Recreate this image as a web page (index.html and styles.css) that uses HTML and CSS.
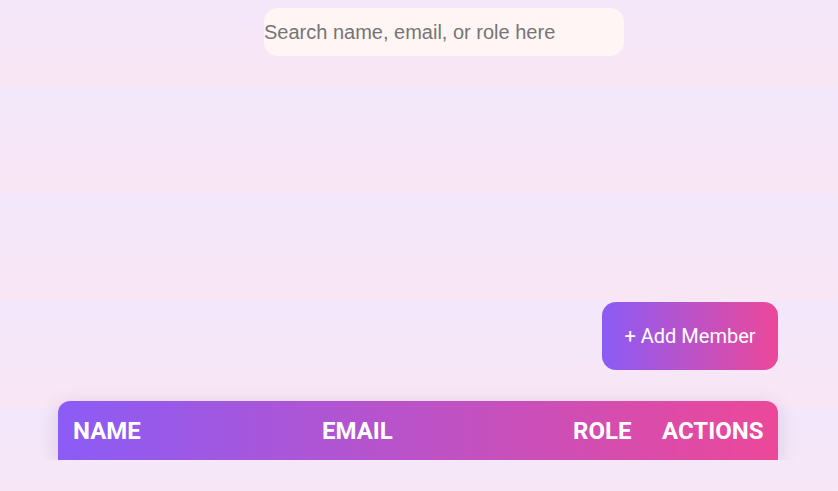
FILE: index.html
```html
<!DOCTYPE html>
<html lang="en">
<head>
<meta charset="utf-8">
<title>Team Members</title>
<link rel="stylesheet" href="styles.css">
</head>
<body>
<main class="page">
  <div class="toolbar">
    <input class="search" type="text" placeholder="Search name, email, or role here">
  </div>
  <div class="actions-bar">
    <button class="add-btn" type="button">+ Add Member</button>
  </div>
  <div class="table">
    <div class="table-head">
      <div class="th">NAME</div>
      <div class="th">EMAIL</div>
      <div class="th">ROLE</div>
      <div class="th">ACTIONS</div>
    </div>
  </div>
</main>
</body>
</html>
```
FILE: styles.css
```css
html {
  background: linear-gradient(180deg, #f3e7fb 0%, #f4e7fa 25%, #f9e6f5 100%);
  background-size: 100% 107.5px;
  background-position: 0 -22px;
  background-repeat: repeat;
  min-height: 100%;
}

body {
  margin: 0;
  padding: 8px 0 0 58px;
  font-family: Roboto, "Noto Sans", sans-serif;
}

.page {
  width: 720px;
}

.toolbar {
  display: flex;
  padding-left: 206px;
}

.search {
  width: 360px;
  height: 48px;
  box-sizing: border-box;
  border: none;
  outline: none;
  padding: 0;
  border-radius: 14px;
  background: #fff5f5;
  font-family: "Liberation Sans", Arial, sans-serif;
  font-size: 20px;
  color: #333;
}

.search::placeholder {
  color: #757575;
}

.actions-bar {
  display: flex;
  justify-content: flex-end;
  margin-top: 246px;
}

.add-btn {
  border: none;
  border-radius: 14px;
  padding: 22px 22px;
  width: 176px;
  height: 68px;
  box-sizing: border-box;
  background: linear-gradient(90deg, #8b5cf6, #ec4899);
  color: #fff;
  font-family: Roboto, sans-serif;
  font-size: 20px;
  line-height: 24px;
  cursor: pointer;
}

.table {
  margin-top: 31px;
  border-radius: 12px 12px 0 0;
  box-shadow: 0 4px 20px rgba(60, 20, 80, 0.15);
  overflow: hidden;
}

.table-head {
  display: grid;
  grid-template-columns: 249px 251px 89px 131px;
  background: linear-gradient(90deg, #8b5cf6, #ec4899);
}

.th {
  padding: 16px 15px 14px;
  color: #fff;
  font-weight: 700;
  font-size: 24px;
  line-height: 29px;
  white-space: nowrap;
}
```
